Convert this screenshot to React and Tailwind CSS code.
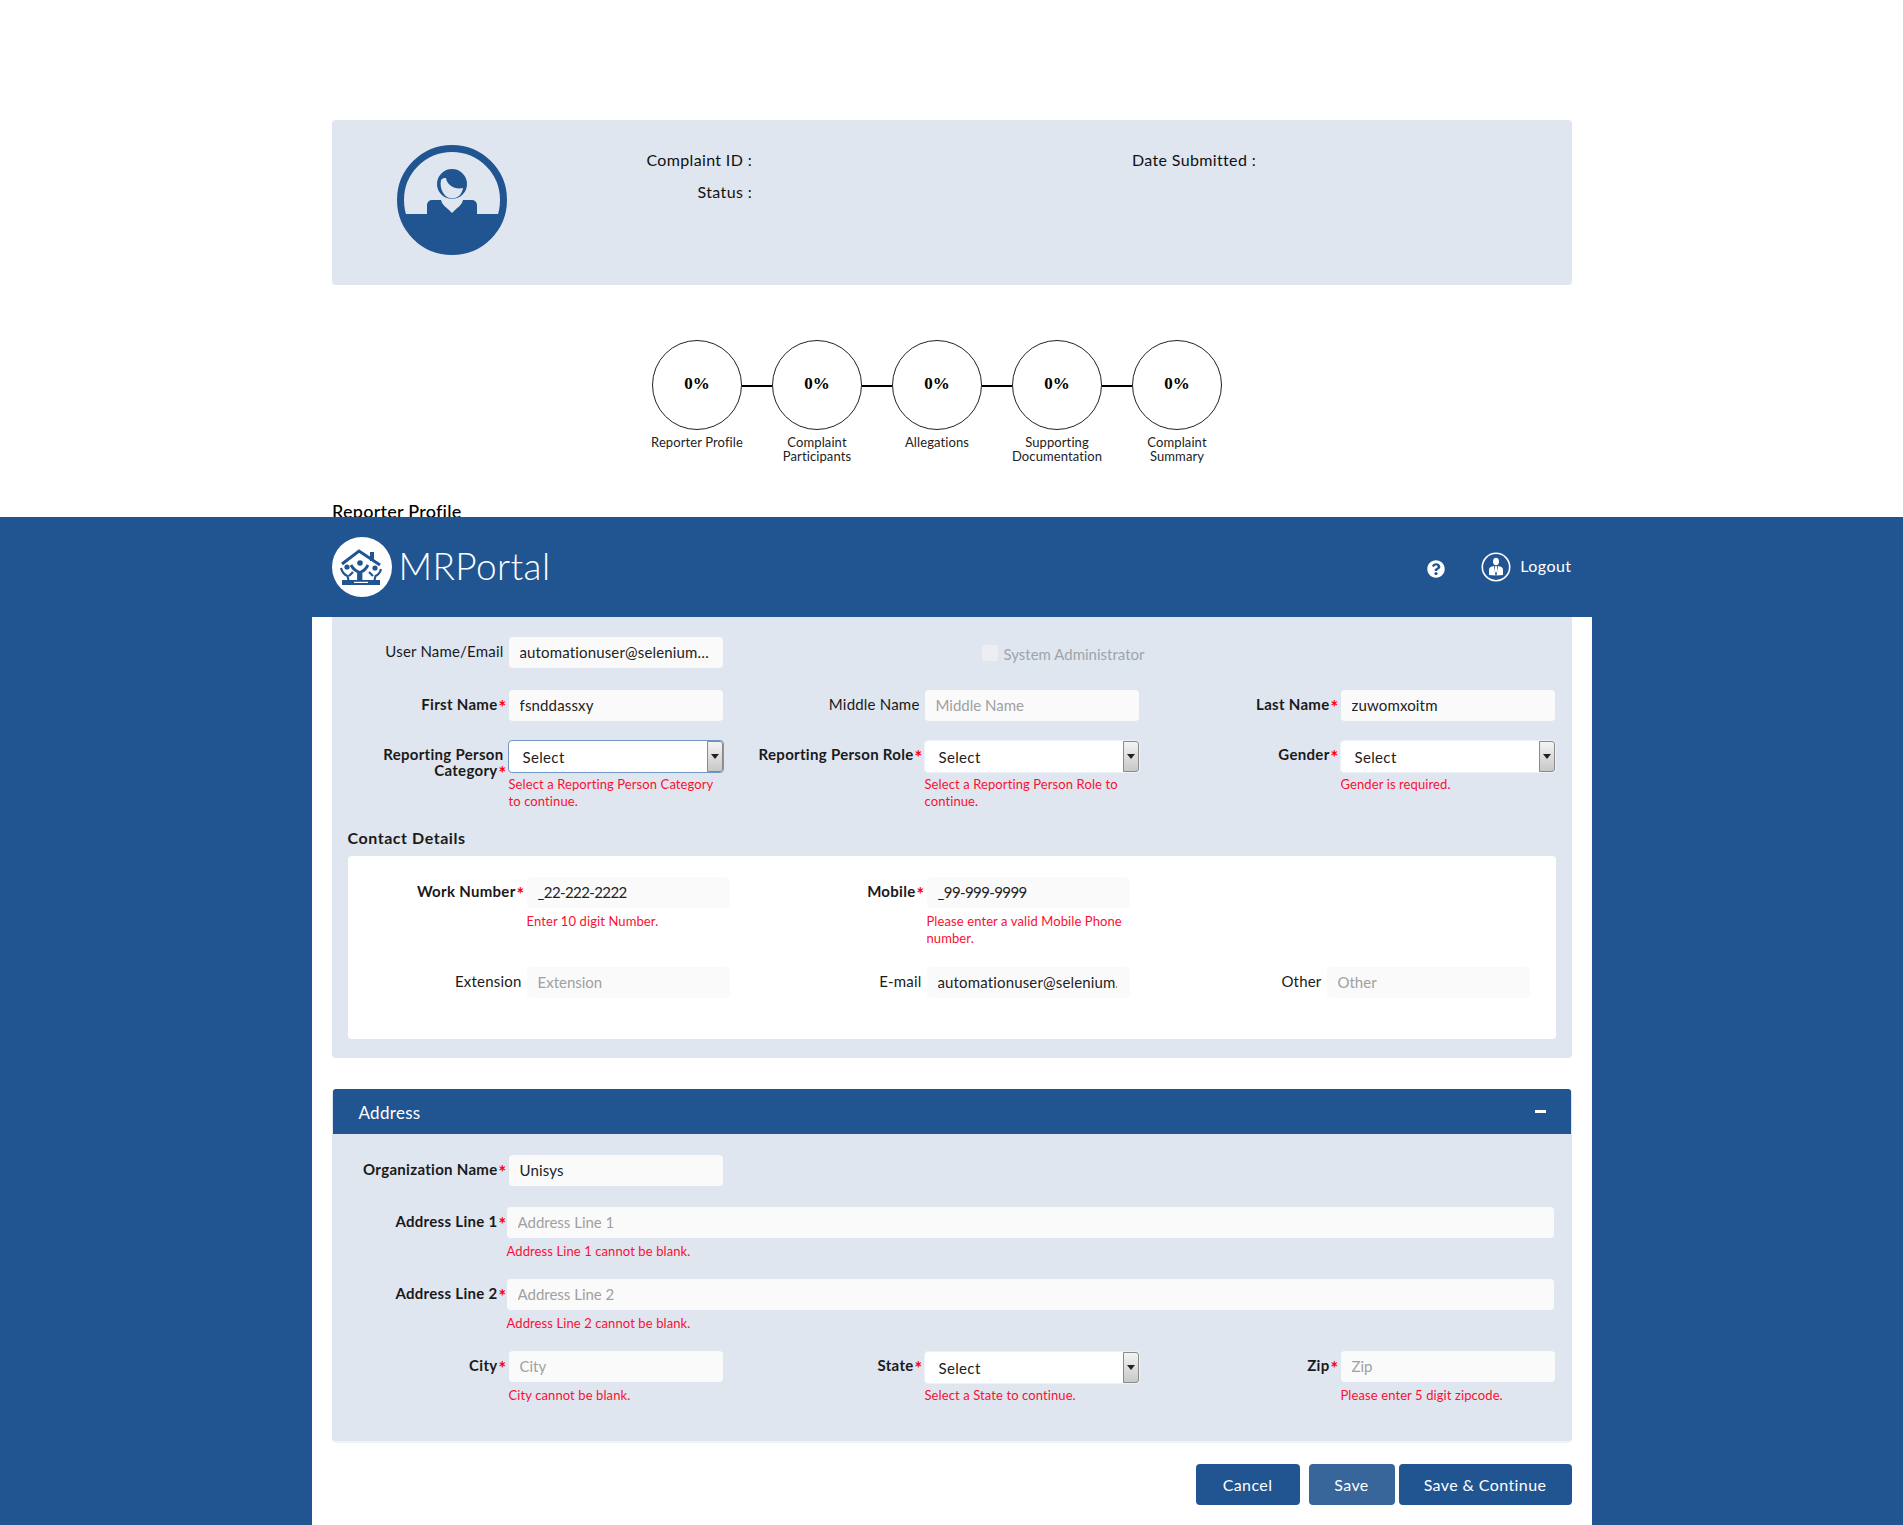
import React from 'react';
import { FaQuestionCircle } from 'react-icons/fa';

const inputClass = 'bg-[#fafafa] rounded-[4px] h-[31px] pl-[11px] pr-[9px] pb-[1px] text-[15px] text-[#222] outline-none placeholder:text-[#a0a0a0] placeholder:tracking-[0] tracking-[0.15px]';

const Req = () => <span className="text-[#f00] font-bold text-[18px] leading-[10px] mr-[-3px] ml-[1px] align-[-4px]">*</span>;

const Label = ({ children, req, bold = true, className = '' }) => (
    <label className={`text-right text-[15px] leading-[16px] pt-[6px] text-[#1a1a1a] ${bold ? 'font-bold tracking-[0.3px]' : 'tracking-[0.2px]'} ${className}`}>
        {children}
        {req && <Req />}
    </label>
);

const Err = ({ children, className = '' }) => (
    <p className={`text-[13px] leading-[17px] text-[#fa1030] tracking-[0.1px] mt-[5px] ${className}`}>{children}</p>
);

const Select = ({ active }) => (
    <div className={`h-[33px] mb-[-2px] rounded-[4px] bg-white flex items-stretch border -mx-[1px] ${active ? 'border-[#7396c4]' : 'border-[#eef1f6]'}`}>
        <span className="flex-1 pl-[14px] pt-[5px] text-[15px] text-[#222] tracking-[0.35px]">Select</span>
        <span className="w-[16px] border border-[#8a8a8a] bg-gradient-to-b from-[#f4f4f4] to-[#c8c8c8] rounded-r-[3px] flex items-center justify-center">
            <span className="border-x-[4px] border-x-transparent border-t-[5px] border-t-[#222]" />
        </span>
    </div>
);

// main column: label on the left, field and message on the right
const Field = ({ label, req, bold, err, children }) => (
    <div className="flex gap-[5px]">
        <Label req={req} bold={bold} className="w-[172px]">{label}</Label>
        <div className="w-[214px] flex flex-col">
            {children}
            {err && <Err>{err}</Err>}
        </div>
    </div>
);

const ContactField = ({ label, req, bold, err, placeholder, value, inputExtra = '' }) => (
    <div className="flex gap-[5px]">
        <Label req={req} bold={bold} className="w-[174px]">{label}</Label>
        <div className="w-[203px] flex flex-col">
            <input readOnly className={`${inputClass} bg-[#f9f9f9] ${inputExtra}`} placeholder={placeholder} value={value} />
            {err && <Err>{err}</Err>}
        </div>
    </div>
);

const Step = ({ label }) => (
    <div className="w-[90px] flex flex-col items-center">
        <div className="w-[90px] h-[90px] rounded-full border border-[#222] flex items-center justify-center font-['Liberation_Serif',serif] font-bold text-[17px] pb-[3px] text-black">0%</div>
        <p className="w-[110px] text-center text-[13px] leading-[14px] mt-[5px] text-[#222] tracking-[0.1px]">{label}</p>
    </div>
);

const Connector = () => <div className="w-[30px] h-[2px] bg-black mt-[45px]" />;

const UserBadge = () => (
    <svg viewBox="0 0 110 110" className="w-[110px] h-[110px]">
        <circle cx="55" cy="55" r="51.5" fill="none" stroke="#215592" strokeWidth="7" />
        <path d="M3.5 69H106.500A55 55 0 0 1 3.5 69Z" fill="#215592" />
        <path d="M30 70V60a5 5 0 0 1 5-5h9c1 5 6 8 8 10l3 3 3-3c2-2 7-5 8-10h9a5 5 0 0 1 5 5v10Z" fill="#215592" />
        <circle cx="55" cy="39" r="15" fill="#215592" />
        <path d="M44 35c2-2 3-2 5-2 1 7 9 12 17 10-1 7-6 10.500-11 10.500-7 0-13-9-11-18.500Z" fill="#dfe6f0" />
    </svg>
);

const LogoMark = () => (
    <svg viewBox="0 0 60 60" className="w-[60px] h-[60px]">
        <circle cx="30" cy="30" r="30" fill="#fff" />
        <g fill="#215592">
            <rect x="38" y="15" width="4" height="9" />
            <circle cx="15" cy="30" r="2.6" />
            <circle cx="28" cy="26" r="2.8" />
            <circle cx="43" cy="31" r="2.6" />
            <rect x="10" y="43" width="38" height="5" />
        </g>
        <g fill="none" stroke="#215592">
            <path d="M10 27 27 14l21 14" strokeWidth="3" />
            <path d="M19 28c2 4 5 6 7.500 7v8M36 28c-2 4-4.500 6-7 7v8" strokeWidth="2.8" />
            <path d="M9 31c1 4 4 7 6.500 8l1 4M21 35l-4 4M49 32c-1 4-3 6-5.500 7l-1 4M37 35l4 4" strokeWidth="2.2" />
        </g>
        <rect x="22" y="44.800" width="14" height="1.2" fill="#fff" />
    </svg>
);

const LogoutIcon = () => (
    <svg viewBox="0 0 30 30" className="w-[30px] h-[30px]">
        <circle cx="15" cy="15" r="13.7" fill="none" stroke="#fff" strokeWidth="1.6" />
        <ellipse cx="15" cy="9.500" rx="3" ry="3.800" fill="#fff" />
        <path d="M8 23v-5c0-2 1-3 3-3.500l2-.5 1.500 9.500Zm14 0v-5c0-2-1-3-3-3.500l-2-.5-1.500 9.500Z" fill="#fff" />
        <path d="M14.200 14h1.600l.5 5-1.300 2-1.300-2Z" fill="#fff" />
    </svg>
);

const Btn = ({ children, className = '' }) => (
    <button className={`h-[41px] rounded-[4px] text-white text-[16px] tracking-[0.4px] ${className}`}>{children}</button>
);

export default function App() {
    return (
        <div className="w-full min-h-screen bg-white font-['Lato','Noto_Sans',sans-serif]">
            {/* top of the page, header below cuts the title off */}
            <section className="h-[517px] overflow-hidden w-[1240px] ml-[332px] pt-[120px]">
                <div className="h-[165px] rounded-[4px] bg-[#dfe6f0] flex">
                    <div className="pl-[65px] pt-[25px]"><UserBadge /></div>
                    <div className="ml-[125px] pt-[24px] w-[120px] text-right text-[16px] leading-[32px] tracking-[0.35px] text-[#111]">
                        <p>Complaint ID :</p>
                        <p>Status :</p>
                    </div>
                    <p className="ml-[380px] pt-[24px] text-[16px] leading-[32px] tracking-[0.35px] text-[#111]">Date Submitted :</p>
                </div>
                <div className="flex ml-[320px] mt-[55px] h-[160px]">
                    <Step label="Reporter Profile" />
                    <Connector />
                    <Step label="Complaint Participants" />
                    <Connector />
                    <Step label="Allegations" />
                    <Connector />
                    <Step label={<>Supporting<br />Documentation</>} />
                    <Connector />
                    <Step label={<>Complaint<br />Summary</>} />
                </div>
                <h2 className="text-[18px] leading-[22px] font-medium text-black tracking-[0.25px]">Reporter Profile</h2>
            </section>

            <section className="bg-[#215592] h-[1008px] flex flex-col">
                <header className="h-[100px] w-[1240px] mx-auto flex items-center shrink-0">
                    <LogoMark />
                    <span className="ml-[7px] mb-[2px] text-[37px] text-white font-light tracking-[0.4px]">MRPortal</span>
                    <FaQuestionCircle className="ml-auto mt-[4px] text-white text-[18px]" />
                    <span className="ml-[36px]"><LogoutIcon /></span>
                    <span className="ml-[9px] mb-[2px] text-[16px] text-white tracking-[0.45px]">Logout</span>
                </header>

                <main className="w-[1280px] mx-auto bg-white flex-1 px-[20px]">
                    <div className="bg-[#dfe6f0] rounded-b-[4px] h-[441px] pt-[20px]">
                        <div className="flex flex-col">
                            <div className="grid grid-cols-[416px_416px_416px] h-[53px]">
                                <Field label="User Name/Email" bold={false}>
                                    <input readOnly className={`${inputClass} truncate`} value="automationuser@seleniumexpress.com" />
                                </Field>
                                <label className="flex items-start gap-[6px] pl-[234px] pt-[6px] text-[15px] text-[#a0a4aa]">
                                    <span className="w-[16px] h-[16px] bg-[#eceef2] rounded-[2px] mt-[2px]" />
                                    System Administrator
                                </label>
                            </div>
                            <div className="grid grid-cols-[416px_416px_416px] h-[50px]">
                                <Field label="First Name" req>
                                    <input readOnly className={inputClass} value="fsnddassxy" />
                                </Field>
                                <Field label="Middle Name" bold={false}>
                                    <input readOnly className={inputClass} placeholder="Middle Name" />
                                </Field>
                                <Field label="Last Name" req>
                                    <input readOnly className={inputClass} value="zuwomxoitm" />
                                </Field>
                            </div>
                            <div className="grid grid-cols-[416px_416px_416px] h-[88px]">
                                <Field label="Reporting Person Category" req err="Select a Reporting Person Category to continue.">
                                    <Select active />
                                </Field>
                                <Field label="Reporting Person Role" req err="Select a Reporting Person Role to continue.">
                                    <Select />
                                </Field>
                                <Field label="Gender" req err="Gender is required.">
                                    <Select />
                                </Field>
                            </div>
                        </div>
                        <h3 className="ml-[16px] text-[16px] leading-[20px] font-bold text-[#1a1a1a] tracking-[0.55px]">Contact Details</h3>
                        <div className="mx-[16px] mt-[8px] h-[183px] bg-white rounded-[4px] pt-[21px]">
                            <div className="grid grid-cols-[400px_400px_400px] h-[90px]">
                                <ContactField label="Work Number" req value="_22-222-2222" inputExtra="!tracking-[-0.6px]" err="Enter 10 digit Number." />
                                <ContactField label="Mobile" req value="_99-999-9999" inputExtra="!tracking-[-0.6px]" err="Please enter a valid Mobile Phone number." />
                            </div>
                            <div className="grid grid-cols-[400px_400px_400px]">
                                <ContactField label="Extension" bold={false} placeholder="Extension" />
                                <ContactField label="E-mail" bold={false} value="automationuser@selenium.com" inputExtra="!pr-[13px]" />
                                <ContactField label="Other" bold={false} placeholder="Other" />
                            </div>
                        </div>
                    </div>

                    <div className="mt-[31px] bg-[#dfe6f0] rounded-[4px] h-[354px] border-b-2 border-[#f0f3f7]">
                        <div className="h-[45px] mx-[1px] bg-[#215592] rounded-t-[3px] flex items-center justify-between pl-[26px] pr-[25px]">
                            <span className="mt-[2px] text-[17px] text-white tracking-[0.3px]">Address</span>
                            <span className="w-[11px] h-[3px] bg-white" />
                        </div>
                        <div className="pt-[21px]">
                            <div className="h-[52px]">
                                <Field label="Organization Name" req>
                                    <input readOnly className={inputClass} value="Unisys" />
                                </Field>
                            </div>
                            <div className="h-[72px] flex gap-[3px]">
                                <Label req className="w-[172px]">Address Line 1</Label>
                                <div className="w-[1047px]">
                                    <input readOnly className={`${inputClass} w-full`} placeholder="Address Line 1" />
                                    <Err>Address Line 1 cannot be blank.</Err>
                                </div>
                            </div>
                            <div className="h-[72px] flex gap-[3px]">
                                <Label req className="w-[172px]">Address Line 2</Label>
                                <div className="w-[1047px]">
                                    <input readOnly className={`${inputClass} w-full`} placeholder="Address Line 2" />
                                    <Err>Address Line 2 cannot be blank.</Err>
                                </div>
                            </div>
                            <div className="grid grid-cols-[416px_416px_416px]">
                                <Field label="City" req err="City cannot be blank.">
                                    <input readOnly className={inputClass} placeholder="City" />
                                </Field>
                                <Field label="State" req err="Select a State to continue.">
                                    <Select />
                                </Field>
                                <Field label="Zip" req err="Please enter 5 digit zipcode.">
                                    <input readOnly className={inputClass} placeholder="Zip" />
                                </Field>
                            </div>
                        </div>
                    </div>

                    <div className="mt-[21px] flex justify-end gap-[4px]">
                        <Btn className="w-[104px] bg-[#215592] mr-[5px]">Cancel</Btn>
                        <Btn className="w-[86px] bg-[#38669b]">Save</Btn>
                        <Btn className="w-[173px] bg-[#215592]">Save &amp; Continue</Btn>
                    </div>
                </main>
            </section>
        </div>
    );
}
